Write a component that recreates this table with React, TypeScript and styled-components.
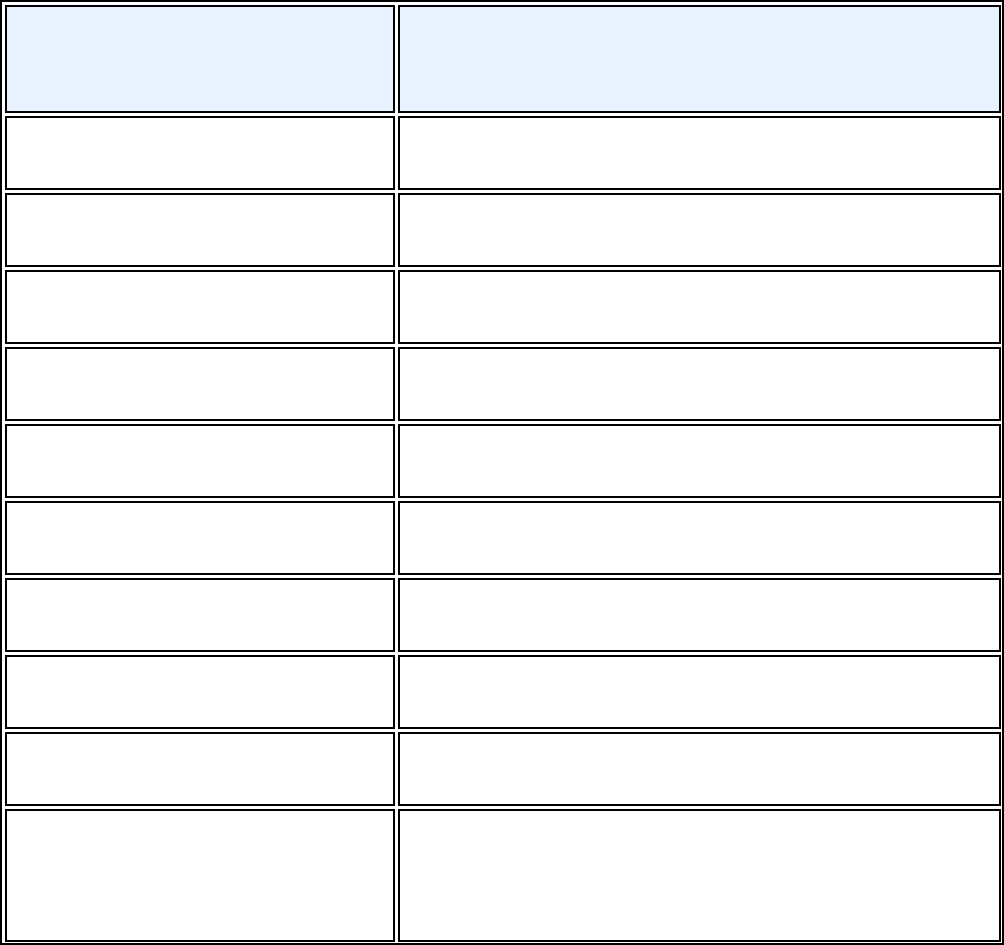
import React from "react";
import styled, { createGlobalStyle } from "styled-components";

const GlobalStyle = createGlobalStyle`
  html, body {
    margin: 0;
    padding: 0;
    background: #ffffff;
    font-family: "Liberation Sans", Arial, sans-serif;
  }
`;

const Frame = styled.div`
  width: 1004px;
  height: 945px;
  box-sizing: border-box;
  border: 2px solid #000;
  padding: 3px 1px 1px 3px;
  display: grid;
  grid-template-columns: 390px 603px;
  grid-template-rows: 108px repeat(9, 74px) 133px;
  gap: 3px;
  background: #fff;
`;

const Cell = styled.div<{ $head?: boolean }>`
  box-sizing: border-box;
  border: 2px solid #000;
  background: ${(p) => (p.$head ? "#e8f2fe" : "#ffffff")};
  padding: 6px 10px;
  font-size: 14px;
  color: #000;
`;

const rows = Array.from({ length: 10 }, (_, i) => i);

const App = () => {
  return (
    <>
      <GlobalStyle />
      <Frame>
        <Cell $head />
        <Cell $head />
        {rows.map((r) => (
          <React.Fragment key={r}>
            <Cell />
            <Cell />
          </React.Fragment>
        ))}
      </Frame>
    </>
  );
};

export default App;
